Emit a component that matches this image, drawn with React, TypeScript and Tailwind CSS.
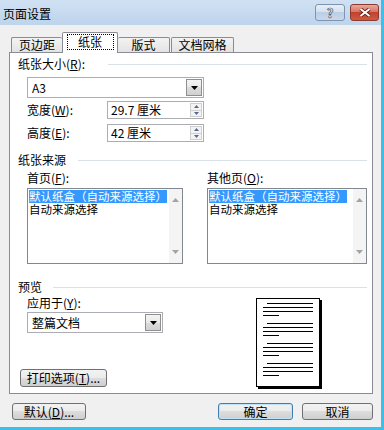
import React from 'react';

const Tri = ({ up = false, color = '#000', w = 7, h = 4 }: { up?: boolean; color?: string; w?: number; h?: number }) => (
  <svg width={w} height={h} viewBox={`0 0 ${w} ${h}`}>
    <path d={up ? `M0 ${h}H${w}L${w / 2} 0Z` : `M0 0H${w}L${w / 2} ${h}Z`} fill={color} />
  </svg>
);

const Select: React.FC<{ value: string; className?: string }> = ({ value, className }) => (
  <div className={`flex h-[21px] items-center border border-[#abadb3] bg-white py-px pl-[4px] pr-px ${className}`}>
    <span className="flex-1 whitespace-nowrap">{value}</span>
    <div className="flex h-full w-[16px] items-center justify-center border border-[#8e8f8f] bg-[linear-gradient(#f4f4f4_0%,#e9e9e9_50%,#dcdcdc_50%,#d0d0d0_100%)]">
      <Tri />
    </div>
  </div>
);

const Spin: React.FC<{ value: string }> = ({ value }) => (
  <div className="flex h-[18px] w-[97px] items-center border border-[#abadb3] bg-white pl-[3px]">
    <span className="flex-1 whitespace-nowrap">{value}</span>
    <div className="mr-px flex h-[14px] w-[12px] flex-col border border-[#cfcfcf] bg-[#f3f3f3]">
      <div className="flex flex-1 items-center justify-center border-b border-[#cfcfcf]">
        <Tri up w={5} h={3} color="#56698c" />
      </div>
      <div className="flex flex-1 items-center justify-center">
        <Tri w={5} h={3} color="#56698c" />
      </div>
    </div>
  </div>
);

const ListBox: React.FC<{ className?: string }> = ({ className }) => (
  <div className={`flex h-[76px] border border-[#828790] bg-white ${className}`}>
    <div className="flex-1 overflow-hidden whitespace-nowrap pl-px pt-px text-[11.5px] leading-[13px]">
      <div className="h-[13px]">
        <span className="inline-block h-[13px] bg-[#3399ff] text-white">默认纸盒（自动来源选择）</span>
      </div>
      <div className="h-[13px]">自动来源选择</div>
    </div>
    <div className="flex w-[13px] flex-col items-center justify-between bg-[#f4f4f4] py-[9px]">
      <Tri up w={7} h={4} color="#a3a3a3" />
      <Tri w={7} h={4} color="#a3a3a3" />
    </div>
  </div>
);

const Heading: React.FC<{ w: string; children: React.ReactNode }> = ({ w, children }) => (
  <div className="flex h-[14px] items-center">
    <span className={`whitespace-nowrap ${w}`}>{children}</span>
    <div className="mt-px h-px flex-1 bg-[#d9e1e6]" />
  </div>
);

const PagePreview = () => {
  const groups = [0, 1, 2, 3];
  return (
    <div className="flex h-[89px] w-[64px] flex-col gap-[7px] border border-black bg-white pl-[6px] pt-[4px] shadow-[2px_2px_0_#000]">
      {groups.map((g) => (
        <div key={g} className="flex flex-col gap-[3px]">
          <div className="ml-[4px] h-px w-[46px] bg-black" />
          <div className="h-px w-[50px] bg-black" />
          <div className="h-px w-[50px] bg-black" />
          <div className="h-px w-[16px] bg-black" />
        </div>
      ))}
    </div>
  );
};

const btn =
  'flex items-center justify-center whitespace-nowrap rounded-[3px] border bg-[linear-gradient(#f2f2f2_0%,#ebebeb_50%,#dddddd_50%,#cfcfcf_100%)]';

export default function App() {
  return (
    <div className="h-[430px] w-[384px] overflow-hidden border-b-[3px] border-r-[3px] border-[#3cbfe9] bg-[#f0f0f0] font-['Noto_Sans_CJK_SC',sans-serif] text-[12px] leading-[14px] text-black">
      {/* title bar */}
      <div className="flex h-[25px] items-start bg-gradient-to-b from-[#d0e1f3] to-[#bed4eb]">
        <span className="ml-[3px] mt-[7px]">页面设置</span>
        <div className="ml-auto mr-[2px] mt-[4px] flex gap-[5px]">
          <div className="flex h-[17px] w-[30px] items-center justify-center rounded-[3px] border border-[#7f93ae] bg-[linear-gradient(#e6eef8_0%,#d3e0ef_50%,#bccee4_50%,#c9d9ec_100%)]">
            <span className="text-[13px] font-bold leading-none text-[#f7f9fc] [-webkit-text-stroke:0.7px_#45566e]">?</span>
          </div>
          <div className="flex h-[17px] w-[29px] items-center justify-center rounded-[3px] border border-[#8b3a30] bg-[linear-gradient(#e9a99b_0%,#d6705f_50%,#c2422f_50%,#cf5a40_100%)]">
            <svg width="12" height="9" viewBox="0 0 12 9">
              <path d="M1.5 1L10.5 8M10.5 1L1.5 8" stroke="#5c1d14" strokeWidth="3.6" />
              <path d="M1.5 1L10.5 8M10.5 1L1.5 8" stroke="#fff" strokeWidth="2" />
            </svg>
          </div>
        </div>
      </div>

      <div className="pl-[9px] pr-[8px] pt-[7px]">
        {/* tabs */}
        <div className="flex h-[20px] items-end">
          <div className="ml-[2px] flex h-[15px] w-[51px] items-center justify-center rounded-t-[2px] border-l border-t border-[#898c95] bg-gradient-to-b from-[#f3f3f3] to-[#e3e3e3]">
            页边距
          </div>
          <div className="relative z-10 -mb-px flex h-[21px] w-[56px] items-start justify-center rounded-t-[2px] border-x border-t border-[#898c95] bg-white pt-px">
            <div className="flex h-[16px] w-[47px] items-center justify-center border border-dotted border-black">纸张</div>
          </div>
          <div className="flex h-[15px] w-[52px] items-center justify-center rounded-t-[2px] border-r border-t border-[#898c95] bg-gradient-to-b from-[#f3f3f3] to-[#e3e3e3]">
            版式
          </div>
          <div className="ml-[1px] flex h-[15px] w-[63px] items-center justify-center rounded-t-[2px] border-x border-t border-[#898c95] bg-gradient-to-b from-[#f3f3f3] to-[#e3e3e3]">
            文档网格
          </div>
        </div>

        {/* tab panel */}
        <div className="flex h-[342px] w-[364px] flex-col border border-[#898c95] bg-white pl-[8px] pr-[5px] pt-[4px]">
          <Heading w="w-[90px]">
            纸张大小(<u>R</u>):
          </Heading>
          <Select className="ml-[9px] mt-[6px] w-[177px]" value="A3" />
          <div className="ml-[9px] mt-[3px] flex items-center">
            <span className="w-[80px]">
              宽度(<u>W</u>):
            </span>
            <Spin value="29.7 厘米" />
          </div>
          <div className="ml-[9px] mt-[5px] flex items-center">
            <span className="w-[80px]">
              高度(<u>E</u>):
            </span>
            <Spin value="42 厘米" />
          </div>

          <div className="mt-[11px]">
            <Heading w="w-[60px]">纸张来源</Heading>
          </div>
          <div className="mt-[4px] flex">
            <div className="ml-[9px] flex w-[156px] flex-col">
              <span className="h-[14px]">
                首页(<u>F</u>):
              </span>
              <ListBox className="mt-[3px]" />
            </div>
            <div className="ml-[24px] flex w-[160px] flex-col">
              <span className="h-[14px]">
                其他页(<u>O</u>):
              </span>
              <ListBox className="mt-[3px]" />
            </div>
          </div>

          <div className="mt-[16px]">
            <Heading w="w-[35px]">预览</Heading>
          </div>
          <div className="flex">
            <div className="flex w-[145px] flex-col pt-[2px]">
              <span className="ml-[9px] h-[14px]">
                应用于(<u>Y</u>):
              </span>
              <Select className="ml-[9px] mt-[2px] w-[136px]" value="整篇文档" />
              <div className={`${btn} ml-[2px] mt-[36px] h-[18px] w-[87px] border-[#707070]`}>
                打印选项(<u>T</u>)...
              </div>
            </div>
            <div className="ml-[93px] mt-[4px]">
              <PagePreview />
            </div>
          </div>
        </div>

        {/* dialog buttons */}
        <div className="mt-[9px] flex">
          <div className={`${btn} ml-[3px] h-[17px] w-[74px] border-[#707070]`}>
            默认(<u>D</u>)...
          </div>
          <div className={`${btn} ml-auto h-[17px] w-[75px] border-[#3c7fb1] shadow-[inset_0_0_0_1px_#bfe3f8]`}>确定</div>
          <div className={`${btn} ml-[9px] h-[17px] w-[71px] border-[#707070]`}>取消</div>
        </div>
      </div>
    </div>
  );
}
